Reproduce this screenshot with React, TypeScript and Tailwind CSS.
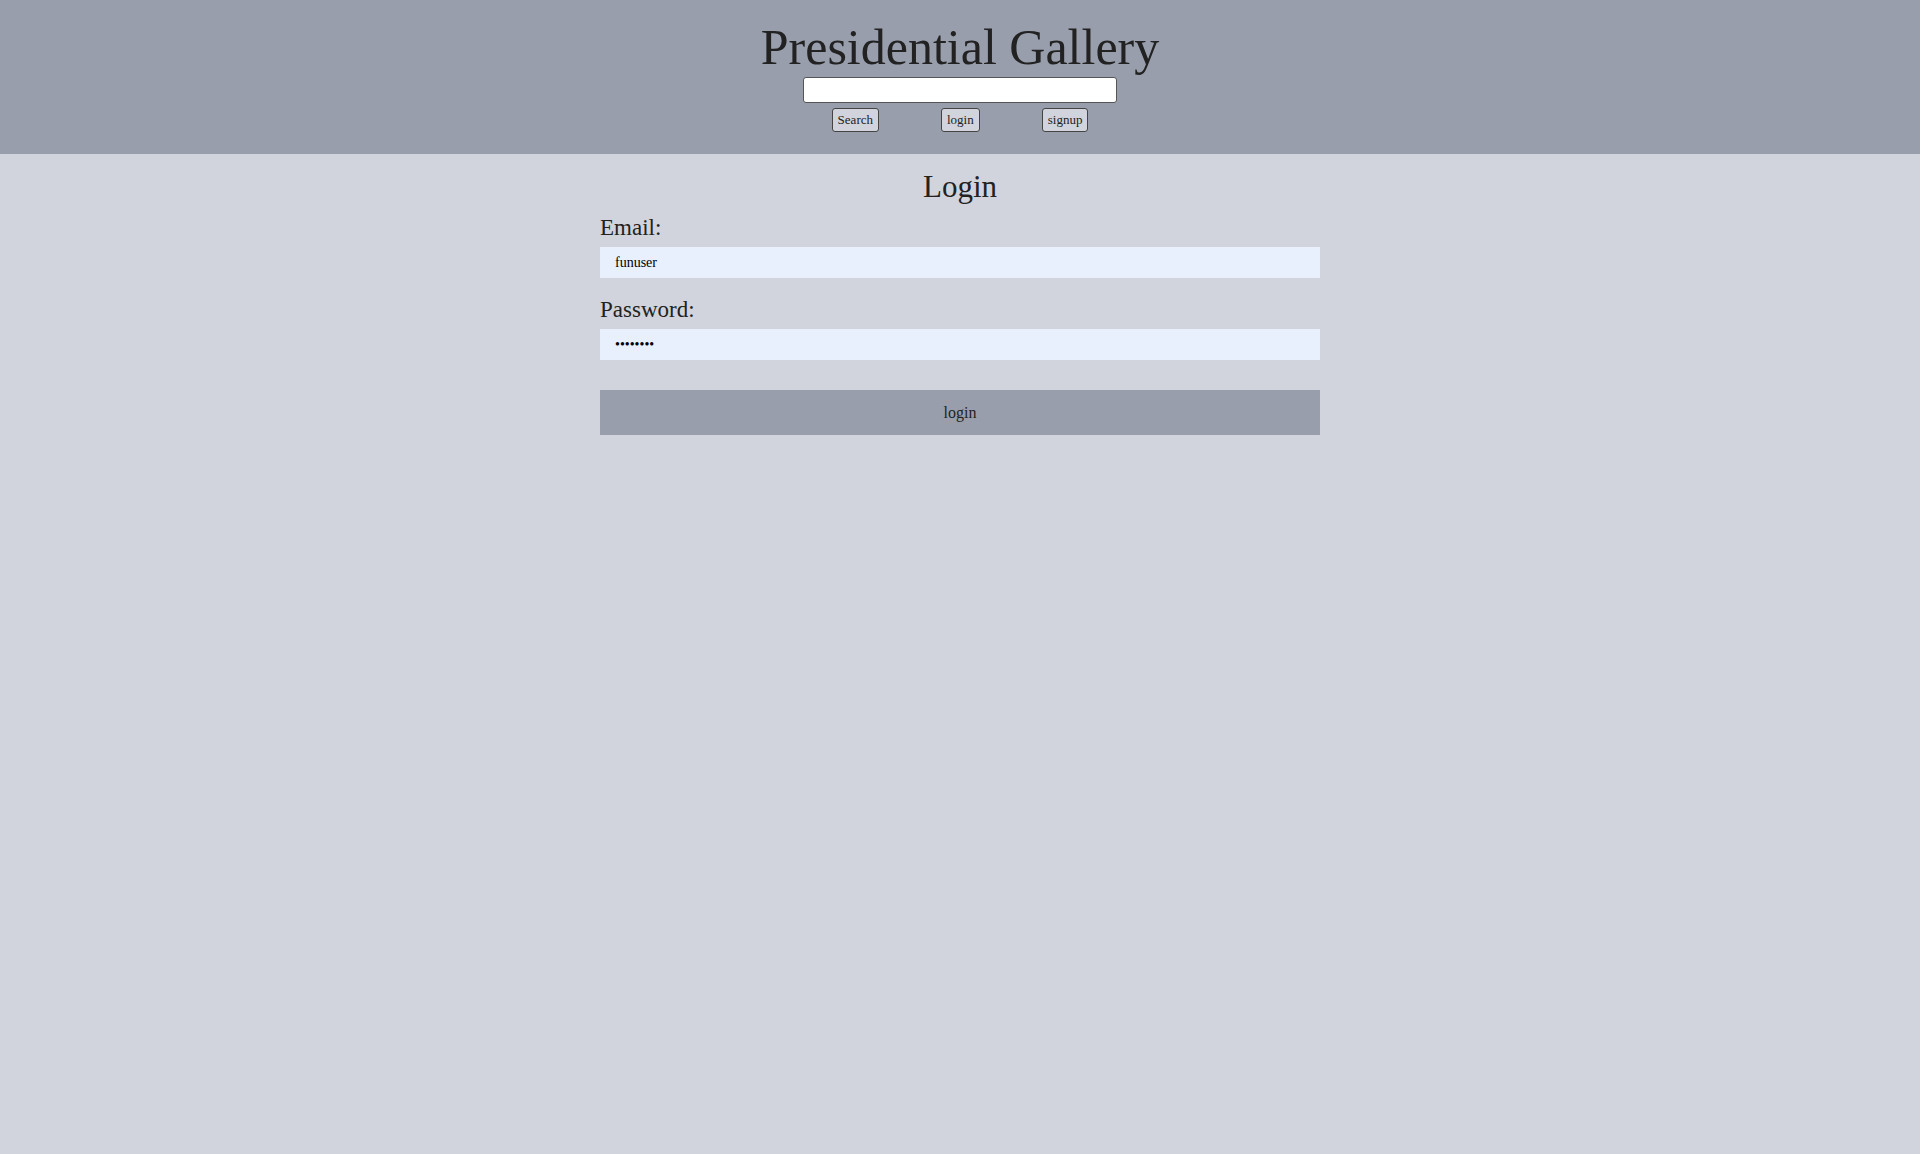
import React from "react";

export default function App() {
  return (
    <div className="min-h-screen bg-[#d1d4dc] font-['Liberation_Serif',serif] text-[#222222]">
      <header className="bg-[#989eac] pt-[23px] pb-[22px] flex flex-col items-center">
        <h1 className="text-[50px] leading-[48px] font-normal">Presidential Gallery</h1>
        <input
          type="text"
          className="mt-[6px] w-[314px] h-[26px] bg-white border border-[#555555] rounded-[3px] px-1 text-[13px] outline-none"
        />
        <div className="mt-[5px] flex justify-center gap-[62px]">
          <button className="h-[24px] px-[5px] text-[13px] bg-[#d1d4dc] border border-[#444444] rounded-[3px] text-[#222222]">
            Search
          </button>
          <button className="h-[24px] px-[5px] text-[13px] bg-[#d1d4dc] border border-[#444444] rounded-[3px] text-[#222222]">
            login
          </button>
          <button className="h-[24px] px-[5px] text-[13px] bg-[#d1d4dc] border border-[#444444] rounded-[3px] text-[#222222]">
            signup
          </button>
        </div>
      </header>
      <main className="w-[720px] mx-auto flex flex-col">
        <h2 className="mt-[18px] text-[31px] leading-[30px] text-center font-normal">Login</h2>
        <label className="mt-[14px] text-[23px] leading-[24px]">Email:</label>
        <input
          type="text"
          readOnly
          value="funuser"
          className="mt-[7px] h-[31px] w-full bg-[#e8f0fe] px-[15px] text-[14px] text-black outline-none"
        />
        <label className="mt-[20px] text-[23px] leading-[24px]">Password:</label>
        <input
          type="password"
          readOnly
          value="funuser1"
          className="mt-[7px] h-[31px] w-full bg-[#e8f0fe] px-[15px] text-[14px] text-black outline-none"
        />
        <button className="mt-[30px] h-[45px] w-full bg-[#989eac] text-[16px] text-[#222222]">
          login
        </button>
      </main>
    </div>
  );
}
